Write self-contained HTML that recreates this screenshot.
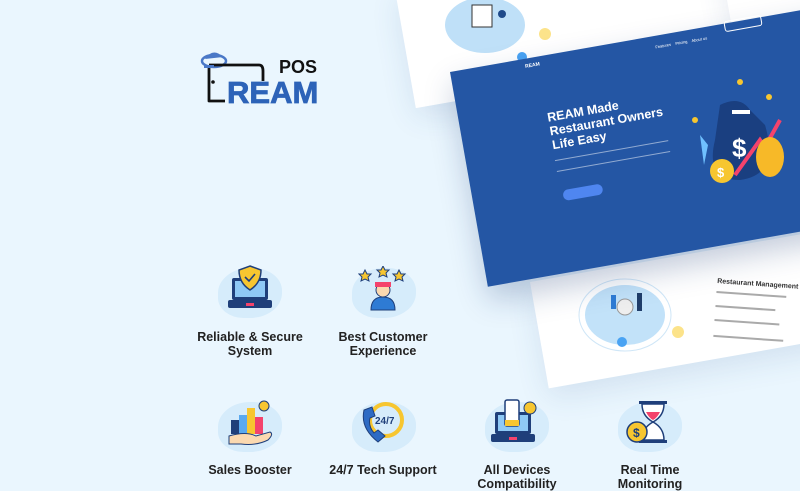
<!DOCTYPE html>
<html><head><meta charset="utf-8">
<style>
*{margin:0;padding:0;box-sizing:border-box}
body{width:800px;height:480px;overflow:hidden;background:#eaf6fe;font-family:"Liberation Sans",sans-serif;position:relative}
.abs{position:absolute}
.card{position:absolute;background:#fff;transform-origin:0 0;transform:rotate(-10deg);box-shadow:0 10px 30px rgba(40,80,140,.12)}
.lbl{position:absolute;width:160px;text-align:center;font-weight:bold;font-size:12.5px;color:#222;line-height:14px}
.blob{position:absolute;width:64px;height:50px;border-radius:50% 45% 50% 40%;background:#d6ecfb}
</style></head><body>

<div class="card" style="left:395px;top:-10px;width:330px;height:120px"></div>
<div class="card" style="left:720px;top:-40px;width:200px;height:80px"></div>
<svg class="abs" style="left:430px;top:0" width="130" height="65">
<ellipse cx="55" cy="25" rx="40" ry="28" fill="#bfe0f8"/>
<rect x="42" y="5" width="20" height="22" fill="#fff" stroke="#333"/>
<circle cx="72" cy="14" r="4" fill="#1f4a8a"/>
<circle cx="115" cy="34" r="6" fill="#fce38a"/>
<circle cx="92" cy="57" r="5" fill="#4aa3f3"/>
</svg>

<div class="card" style="left:530px;top:282px;width:320px;height:108px"></div>
<svg class="abs" style="left:575px;top:265px" width="225" height="115">
<ellipse cx="50" cy="50" rx="40" ry="30" fill="#c2e2f9"/>
<ellipse cx="50" cy="50" rx="46" ry="36" fill="none" stroke="#cfe6f7"/>
<circle cx="50" cy="42" r="8" fill="#eee" stroke="#999"/>
<rect x="36" y="30" width="5" height="14" fill="#2e7bd4"/>
<rect x="62" y="28" width="5" height="18" fill="#1f3d6a"/>
<circle cx="103" cy="67" r="6" fill="#fce38a"/>
<circle cx="47" cy="77" r="5" fill="#4aa3f3"/>
<g transform="rotate(4 170 20)" font-family="Liberation Sans" fill="#333">
<text x="142" y="20" font-size="7" font-weight="bold">Restaurant Management</text>
<rect x="142" y="28" width="70" height="2" fill="#aaa"/>
<rect x="142" y="42" width="60" height="2" fill="#aaa"/>
<rect x="142" y="56" width="65" height="2" fill="#aaa"/>
<rect x="142" y="72" width="70" height="2" fill="#aaa"/>
</g>
</svg>

<div class="card" style="left:450px;top:72px;width:420px;height:218px;background:#2456a4;box-shadow:0 14px 30px rgba(20,50,110,.25)">
  <div class="abs" style="left:88px;top:55px;color:#fff;font-weight:bold;font-size:12.5px;line-height:14px">REAM Made<br>Restaurant Owners<br>Life Easy</div>
  <div class="abs" style="left:88px;top:105px;width:115px;height:12px;border-top:1.5px solid rgba(255,255,255,.5);border-bottom:1.5px solid rgba(255,255,255,.5)"></div>
  <div class="abs" style="left:90px;top:136px;width:40px;height:11px;border-radius:6px;background:#4f86f0"></div>
  <div class="abs" style="left:75px;top:5px;color:#fff;font-size:5px;font-weight:bold">REAM</div>
</div>
<div class="abs" style="left:724px;top:18px;width:38px;height:11px;border:1px solid #fff;border-radius:3px;transform:rotate(-10deg)"></div>
<div class="abs" style="left:655px;top:40px;color:#fff;font-size:4px;transform:rotate(-10deg)">Features &nbsp;&nbsp; Pricing &nbsp;&nbsp; About us</div>
<svg class="abs" style="left:680px;top:65px" width="120" height="125">
<path d="M40 40 Q60 30 70 45 L85 60 Q100 110 60 115 Q25 115 35 75Z" fill="#1a3f80"/>
<rect x="52" y="45" width="18" height="4" fill="#fff"/>
<text x="52" y="92" font-size="26" font-weight="bold" fill="#fff" font-family="Liberation Sans">$</text>
<path d="M55 110 L80 75 L85 82 L100 55" stroke="#f4436c" stroke-width="4" fill="none"/>
<ellipse cx="90" cy="92" rx="14" ry="20" fill="#f7b928"/>
<circle cx="42" cy="106" r="12" fill="#f7c630"/>
<text x="37" y="112" font-size="13" font-weight="bold" fill="#fff" font-family="Liberation Sans">$</text>
<path d="M20 70 L28 80 L24 100 Z" fill="#6fc0ff"/>
<circle cx="15" cy="55" r="3" fill="#f7c630"/><circle cx="60" cy="17" r="3" fill="#f7c630"/><circle cx="89" cy="32" r="3" fill="#f7c630"/>
</svg>

<!-- logo -->
<svg class="abs" style="left:195px;top:45px" width="130" height="62">
<path d="M10 14 Q18 2 28 12" fill="#4a78c7"/>
<ellipse cx="19" cy="16" rx="12" ry="6" fill="none" stroke="#4a78c7" stroke-width="2.5"/>
<path d="M14 20 L14 56 L30 56 M14 20 L64 20 Q68 20 68 26 L68 36" fill="none" stroke="#111" stroke-width="2.8" stroke-linejoin="round"/>
<rect x="9" y="20" width="10" height="3" fill="#4a78c7"/>
<circle cx="18" cy="37" r="1.8" fill="#111"/>
<text x="84" y="28" font-size="18" font-weight="bold" fill="#111" font-family="Liberation Sans">POS</text>
<text x="32" y="58" font-size="31" font-weight="900" fill="#2d63b8" font-family="Liberation Sans" stroke="#2d63b8" stroke-width="0.8">REAM</text>
</svg>

<div class="blob" style="left:218px;top:268px"></div>
<svg class="abs" style="left:225px;top:263px" width="50" height="50">
<rect x="7" y="15" width="36" height="22" rx="2" fill="#1f3f7a"/><rect x="10" y="18" width="30" height="16" fill="#8fc9f5"/>
<rect x="3" y="37" width="44" height="8" rx="2" fill="#1f3f7a"/><rect x="21" y="40" width="8" height="3" fill="#f4436c"/>
<path d="M25 3 L36 7 Q36 20 25 27 Q14 20 14 7Z" fill="#f7c630" stroke="#1f3f7a" stroke-width="1.5"/>
<path d="M20 14 L24 18 L30 11" stroke="#1f3f7a" stroke-width="1.6" fill="none"/>
</svg>
<div class="lbl" style="left:170px;top:330px">Reliable &amp; Secure<br>System</div>

<div class="blob" style="left:352px;top:268px"></div>
<svg class="abs" style="left:358px;top:266px" width="50" height="50">
<path d="M7 4l2 4h4l-3 3 1 4-4-2-4 2 1-4-3-3h4z" fill="#f7c630" stroke="#1f3f7a"/>
<path d="M25 0l2 4h4l-3 3 1 4-4-2-4 2 1-4-3-3h4z" fill="#f7c630" stroke="#1f3f7a"/>
<path d="M41 4l2 4h4l-3 3 1 4-4-2-4 2 1-4-3-3h4z" fill="#f7c630" stroke="#1f3f7a"/>
<circle cx="25" cy="24" r="7" fill="#fbd9b0" stroke="#1f3f7a"/><rect x="17" y="16" width="16" height="5" fill="#f4436c"/>
<path d="M13 44 Q13 31 25 31 Q37 31 37 44Z" fill="#2e7bd4" stroke="#1f3f7a"/>
</svg>
<div class="lbl" style="left:303px;top:330px">Best Customer<br>Experience</div>

<div class="blob" style="left:218px;top:402px"></div>
<svg class="abs" style="left:226px;top:398px" width="50" height="50">
<rect x="5" y="22" width="8" height="14" fill="#1f3f7a"/><rect x="13" y="17" width="8" height="19" fill="#5aa9ef"/>
<rect x="21" y="10" width="8" height="26" fill="#f7c630"/><rect x="29" y="19" width="8" height="17" fill="#f4436c"/>
<path d="M3 38 Q20 33 30 38 L44 34 Q48 36 42 42 Q30 48 15 46 L3 46Z" fill="#fbd9b0" stroke="#1f3f7a"/>
<circle cx="38" cy="8" r="5" fill="#f7c630" stroke="#1f3f7a"/>
</svg>
<div class="lbl" style="left:170px;top:463px">Sales Booster</div>

<div class="blob" style="left:352px;top:402px"></div>
<svg class="abs" style="left:358px;top:398px" width="50" height="50">
<circle cx="28" cy="22" r="16" fill="none" stroke="#f7c630" stroke-width="4"/>
<text x="17" y="26" font-size="10" font-weight="bold" fill="#1f3f7a" font-family="Liberation Sans">24/7</text>
<path d="M6 12 Q2 30 20 44 L27 38 L20 32 L16 35 Q10 28 12 20 L17 18 L14 9Z" fill="#2e6bc4" stroke="#1f3f7a"/>
</svg>
<div class="lbl" style="left:303px;top:463px">24/7 Tech Support</div>

<div class="blob" style="left:485px;top:402px"></div>
<svg class="abs" style="left:490px;top:396px" width="50" height="50">
<rect x="5" y="16" width="36" height="22" rx="2" fill="#1f3f7a"/><rect x="8" y="19" width="30" height="16" fill="#8fc9f5"/>
<rect x="1" y="38" width="44" height="8" rx="2" fill="#1f3f7a"/><rect x="19" y="41" width="8" height="3" fill="#f4436c"/>
<rect x="15" y="4" width="14" height="26" rx="2" fill="#fff" stroke="#1f3f7a" stroke-width="1.5"/><rect x="15" y="24" width="14" height="6" fill="#f7c630"/>
<circle cx="40" cy="12" r="6" fill="#f7c630" stroke="#1f3f7a"/>
</svg>
<div class="lbl" style="left:437px;top:463px">All Devices<br>Compatibility</div>

<div class="blob" style="left:618px;top:402px"></div>
<svg class="abs" style="left:624px;top:398px" width="50" height="50">
<rect x="15" y="3" width="28" height="3" fill="#1f3f7a"/><rect x="15" y="42" width="28" height="3" fill="#1f3f7a"/>
<path d="M18 6 Q18 18 29 24 Q18 30 18 42 L40 42 Q40 30 29 24 Q40 18 40 6Z" fill="#fff" stroke="#1f3f7a" stroke-width="1.5"/>
<path d="M22 14 L36 14 Q33 20 29 22 Q25 20 22 14Z" fill="#f4436c"/>
<circle cx="13" cy="34" r="10" fill="#f7c630" stroke="#1f3f7a" stroke-width="1.5"/>
<text x="9" y="39" font-size="12" font-weight="bold" fill="#1f3f7a" font-family="Liberation Sans">$</text>
</svg>
<div class="lbl" style="left:570px;top:463px">Real Time<br>Monitoring</div>

</body></html>
